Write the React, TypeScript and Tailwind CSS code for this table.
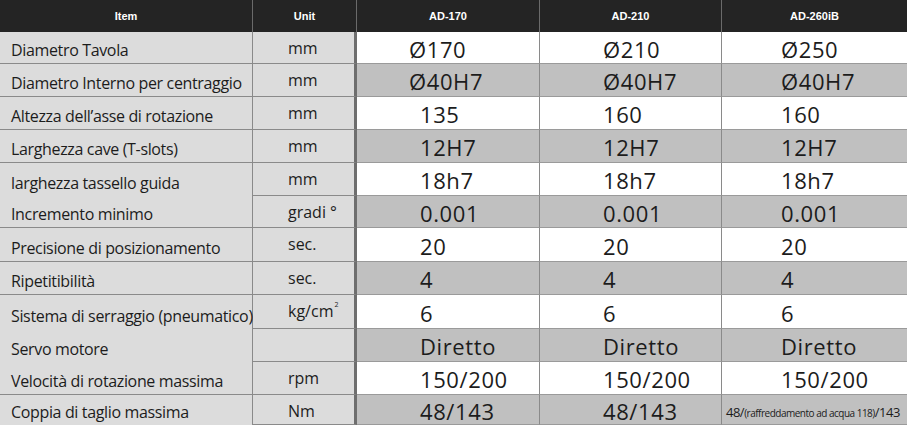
const rows = [
  { item: "Diametro Tavola", unit: "mm", vals: ["Ø170", "Ø210", "Ø250"], h: 32, line: true, dia: true },
  { item: "Diametro Interno per centraggio", unit: "mm", vals: ["Ø40H7", "Ø40H7", "Ø40H7"], h: 33, line: true, dia: true },
  { item: "Altezza dell’asse di rotazione", unit: "mm", vals: ["135", "160", "160"], h: 33, line: true },
  { item: "Larghezza cave (T-slots)", unit: "mm", vals: ["12H7", "12H7", "12H7"], h: 33, line: true },
  { item: "larghezza tassello guida", unit: "mm", vals: ["18h7", "18h7", "18h7"], h: 33, line: false },
  { item: "Incremento minimo", unit: "gradi °", vals: ["0.001", "0.001", "0.001"], h: 32, line: true },
  { item: "Precisione di posizionamento", unit: "sec.", vals: ["20", "20", "20"], h: 34, line: true },
  { item: "Ripetitibilità", unit: "sec.", vals: ["4", "4", "4"], h: 33, line: true },
  { item: "Sistema di serraggio (pneumatico)", unit: "kg/cm", vals: ["6", "6", "6"], h: 34, line: false, sup: true },
  { item: "Servo motore", unit: "", vals: ["Diretto", "Diretto", "Diretto"], h: 33, line: false },
  { item: "Velocità di rotazione massima", unit: "rpm", vals: ["150/200", "150/200", "150/200"], h: 33, line: true },
  { item: "Coppia di taglio massima", unit: "Nm", vals: ["48/143", "48/143", ""], h: 30, line: false, last: true },
];

const cols = "grid grid-cols-[253px_104px_183px_182px_185px] grid-rows-[100%] overflow-hidden";

const App = () => {
  return (
    <div className="w-[907px] h-[425px] overflow-hidden bg-white text-[#1c1c1c]" style={{ fontFamily: '"Open Sans", "Noto Sans", sans-serif' }}>
      <div className={`${cols} h-[32px] bg-[#242424] text-white text-[11px] font-bold`} style={{ fontFamily: '"Liberation Sans", Arial, sans-serif' }}>
        <div className="flex items-center justify-center border-r border-[#6a6a6a]">Item</div>
        <div className="flex items-center justify-center border-r border-[#6a6a6a]">Unit</div>
        <div className="flex items-center justify-center border-r border-[#6a6a6a]">AD-170</div>
        <div className="flex items-center justify-center border-r border-[#6a6a6a]">AD-210</div>
        <div className="flex items-center justify-center">AD-260iB</div>
      </div>
      {rows.map((r, i) => {
        const gray = i % 2 === 1;
        return (
          <div key={i} className={cols} style={{ height: r.h }}>
            <div className={`flex items-end pb-[3px] pl-[11px] bg-[#dcdcdc] text-[16px] leading-[20px] tracking-[-0.35px] whitespace-nowrap border-r border-[#8a8a8a] ${r.line ? "border-b border-[#8a8a8a]" : ""}`}>
              {r.item}
            </div>
            <div className="flex items-start pt-[6px] pl-[35px] bg-[#dcdcdc] text-[16px] leading-[20px] border-b border-[#8a8a8a] border-r-[3px] border-r-[#6e6e6e]">
              <span className="relative whitespace-nowrap">
                {r.unit}
                {r.sup && <span className="absolute -right-[5px] top-[0px] text-[7px] leading-none">2</span>}
              </span>
            </div>
            {r.vals.map((v, j) => (
              <div
                key={j}
                className={`flex items-center pt-[2px] text-[22px] leading-[26px] tracking-[0.6px] border-b border-[#9a9a9a] ${j < 2 ? "border-r border-r-[#8a8a8a]" : ""} ${gray ? "bg-[#c0c0c0]" : "bg-white"} ${r.dia && j === 0 ? "pl-[52px]" : j === 2 ? "pl-[59px]" : "pl-[63px]"}`}
              >
                {r.last && j === 2 ? (
                  <span className="-ml-[55px] mt-[4px] text-[13px] leading-[16px] tracking-[-0.5px] whitespace-nowrap">
                    48/<span className="text-[10px]">(raffreddamento ad acqua 118)</span>/143
                  </span>
                ) : (
                  v
                )}
              </div>
            ))}
          </div>
        );
      })}
    </div>
  );
};

export default App;
